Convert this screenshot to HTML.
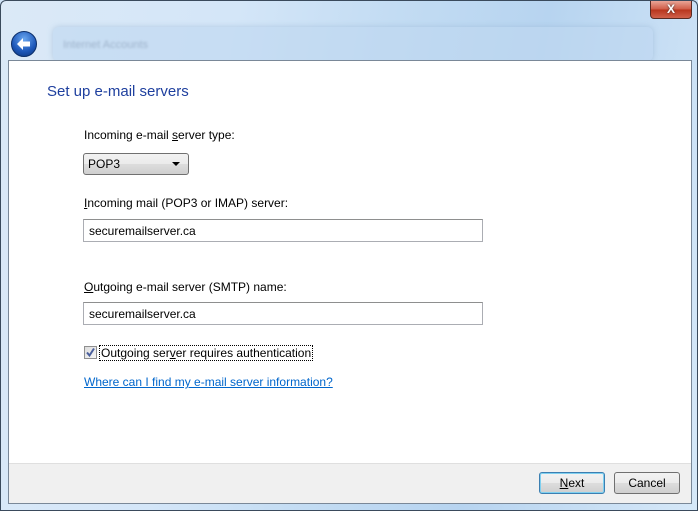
<!DOCTYPE html>
<html><head><meta charset="utf-8"><style>
*{margin:0;padding:0;box-sizing:border-box}
body{width:698px;height:511px;overflow:hidden;font-family:"Liberation Sans",sans-serif;font-size:12px;color:#000;background:#cfe3f7}
.frame{position:absolute;left:0;top:0;width:698px;height:511px;border:1px solid #3a4a5c;border-radius:6px 6px 0 0;background:linear-gradient(100deg,#dbe9f7 0%,#d4e6f8 30%,#c3dcf3 50%,#b7d4f0 70%,#d6e8f8 100%)}
.ghost{position:absolute;left:52px;top:26px;width:600px;height:34px;border-radius:6px;background:rgba(190,215,240,.6);box-shadow:0 0 6px rgba(150,180,210,.6)}
.ghost span{position:absolute;left:10px;top:12px;font-size:11px;color:#9fb4cc;filter:blur(1px)}
.close{position:absolute;left:649px;top:0px;width:42px;height:18px;border:1px solid #5a2a22;border-top:none;border-radius:0 0 4px 4px;background:linear-gradient(#e9a597,#cf5a44 50%,#b8341c 51%,#d0604a);color:#fff;font-weight:bold;font-size:12px;text-align:center;line-height:16px;text-shadow:0 0 2px #333}
.back{position:absolute;left:10px;top:30px;width:26px;height:26px;border-radius:50%;background:radial-gradient(circle at 50% 30%,#6aa7f0,#1c56b8 60%,#0c3477);border:1px solid #0c2f6a}
.content{position:absolute;left:7px;top:59px;width:684px;height:444px;border:1px solid #7a8898;background:#fff;overflow:hidden}
.footer{position:absolute;left:0;top:402px;width:682px;height:41px;background:#f0f0f0;border-top:1px solid #dfdfdf}
h1{position:absolute;left:38px;top:22px;font-size:15px;font-weight:normal;color:#1e3f9e}
.lbl{position:absolute;left:75px}
u{text-decoration:underline}
.sel{position:absolute;left:74px;top:92px;width:106px;height:22px;border:1px solid #707070;border-radius:3px;background:linear-gradient(#f2f2f2,#ebebeb 50%,#dddddd 51%,#cfcfcf);padding:3px 4px;font-size:12px}
.sel:after{content:"";position:absolute;right:8px;top:8px;border:4px solid transparent;border-top:4px solid #000;border-bottom:none}
.inp{position:absolute;left:74px;width:400px;height:23px;border:1px solid #abadb3;border-top-color:#8e8f8f;padding:4px 5px;font-size:12px}
.cb{position:absolute;left:75px;top:285px;width:13px;height:13px;border:1px solid #8f8f8f;background:linear-gradient(135deg,#dcdcdc,#f6f6f6)}
.link{position:absolute;left:75px;top:314px;color:#0066cc;text-decoration:underline}
.btn{position:absolute;top:8px;width:66px;height:22px;border:1px solid #707070;border-radius:3px;background:linear-gradient(#f2f2f2,#ebebeb 50%,#dddddd 51%,#cfcfcf);text-align:center;line-height:20px}
</style></head><body>
<div class="frame">
<div class="ghost"><span>Internet Accounts</span></div>
<div class="close">X</div>
<div class="back"><svg width="26" height="26" viewBox="0 0 26 26" style="position:absolute;left:-1px;top:-1px"><path d="M6 13 L12 7 L12 10.5 L19 10.5 L19 15.5 L12 15.5 L12 19 Z" fill="#fff"/></svg></div>
<div class="content">
<h1>Set up e-mail servers</h1>
<div class="lbl" style="top:67px">Incoming e-mail <u>s</u>erver type:</div>
<div class="sel">POP3</div>
<div class="lbl" style="top:135px"><u>I</u>ncoming mail (POP3 or IMAP) server:</div>
<div class="inp" style="top:158px">securemailserver.ca</div>
<div class="lbl" style="top:219px"><u>O</u>utgoing e-mail server (SMTP) name:</div>
<div class="inp" style="top:241px">securemailserver.ca</div>
<div class="cb"><svg width="11" height="11" viewBox="0 0 11 11" style="position:absolute;left:0;top:0"><path d="M2 5.5 L4.5 8.5 L9 1.5" stroke="#4a5f9c" stroke-width="2" fill="none"/></svg></div>
<div class="lbl" style="top:284px;left:90px;border:1px dotted #000;padding:0 1px">Outgoing ser<u>v</u>er requires authentication</div>
<div class="link">Where can I find my e-mail server information?</div>
<div class="footer">
<div class="btn" style="left:530px;border-color:#3c7fb1;box-shadow:inset 0 0 0 1px #7fd0f0"><u>N</u>ext</div>
<div class="btn" style="left:605px">Cancel</div>
</div>
</div>
</div>
</body></html>
